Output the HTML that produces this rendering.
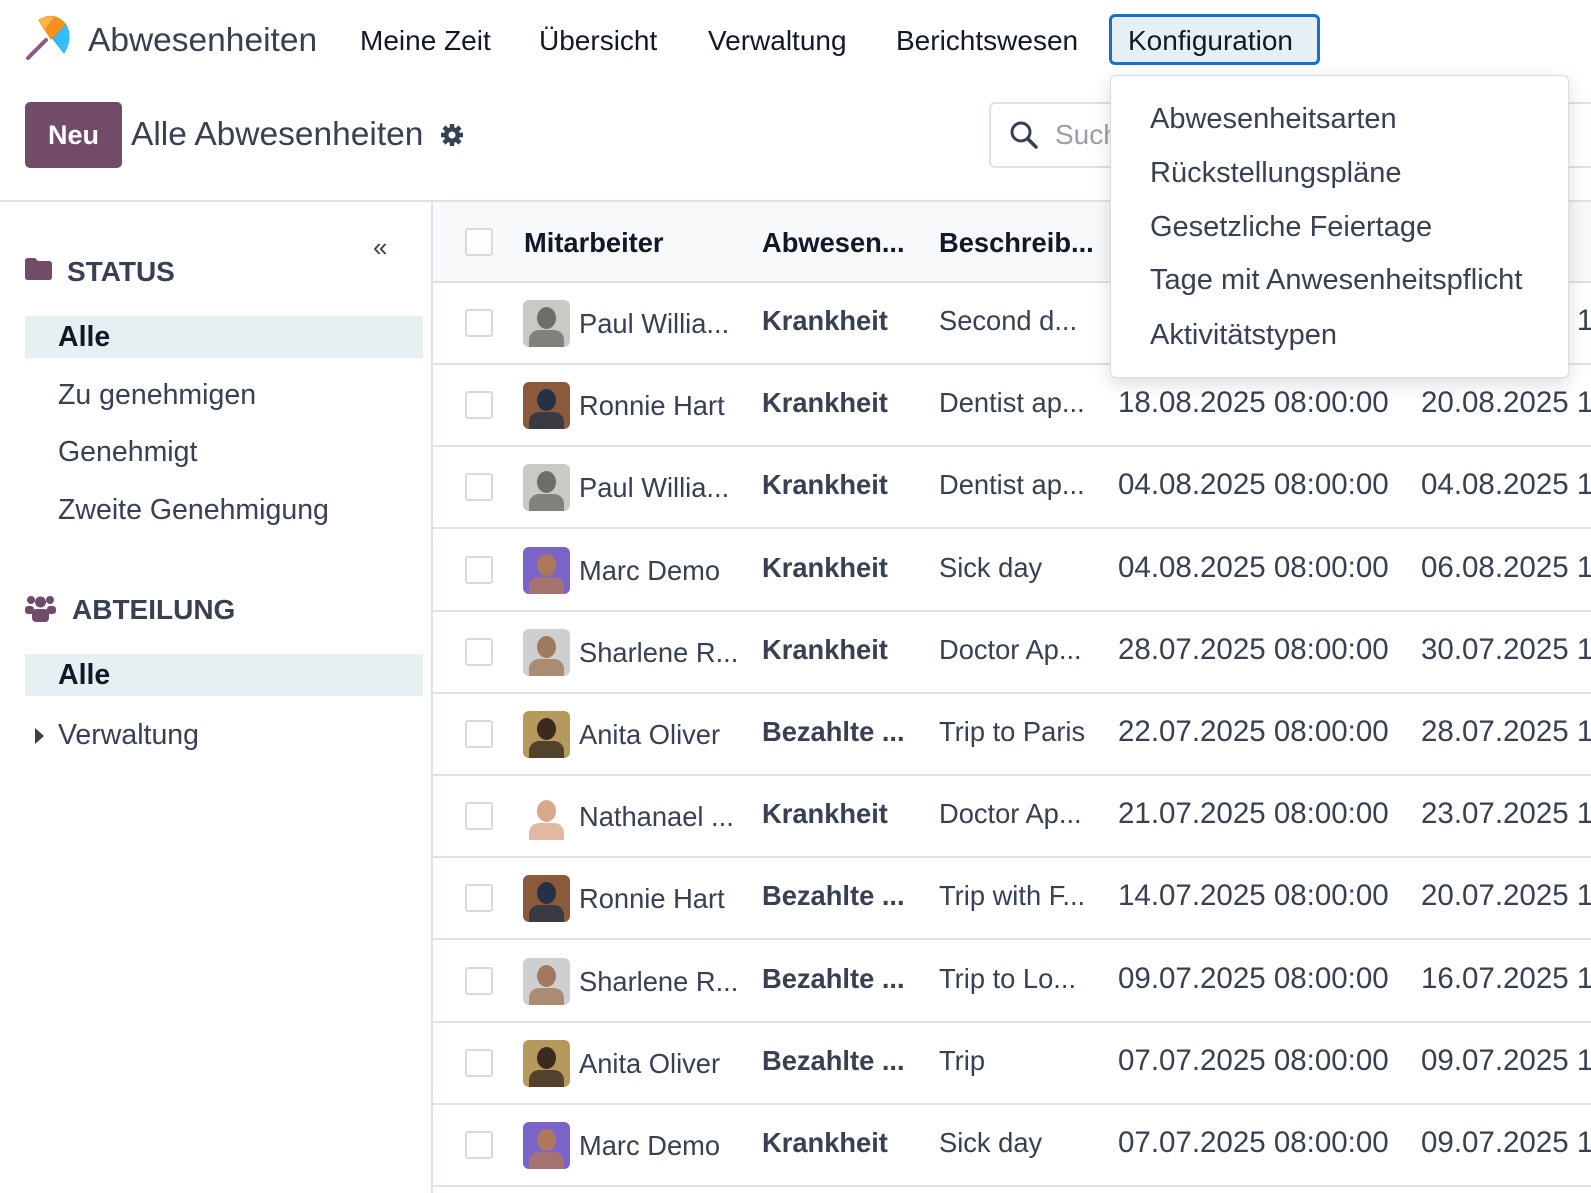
<!DOCTYPE html>
<html><head><meta charset="utf-8"><style>
*{box-sizing:border-box;margin:0;padding:0}
body{width:1591px;height:1193px;overflow:hidden;background:#fff;font-family:"Liberation Sans",sans-serif;color:#374151;position:relative}
.a{position:absolute;white-space:nowrap}
.nav{font-size:28px;color:#111827;top:25px}
.cb{position:absolute;width:28px;height:28px;border:2px solid #d8dadd;border-radius:3px;background:#fff}
.row{position:absolute;left:433px;width:1158px;height:82px;border-bottom:2px solid #dee2e6;font-size:27.3px;color:#374151}
.row .t{position:absolute;top:24px;white-space:nowrap}
.av{position:absolute;left:90px;top:17px;width:47px;height:47px;border-radius:6px;overflow:hidden}
.side{font-size:28.5px;color:#374151}
.dd{font-size:29px;color:#374151;left:1150px}
</style></head><body>
<svg class="a" style="left:24px;top:12px" width="50" height="50" viewBox="0 0 50 50">
<line x1="4" y1="46" x2="22" y2="28" stroke="#8a5a7e" stroke-width="4" stroke-linecap="round"/>
<path d="M14 8 Q30 -2 42 12 Q50 26 40 42 Z" fill="#2ea8f0"/>
<path d="M14 8 Q30 -2 42 12 L27 28 Z" fill="#f7901e"/>
<path d="M14 8 Q22 3 30 5 L20 18 Z" fill="#fbb444"/>
<path d="M42 12 Q50 26 40 42 L30 26 Z" fill="#37bdf8"/>
</svg>
<div class="a" style="left:88px;top:22px;font-size:33.5px;color:#374151">Abwesenheiten</div>
<div class="a nav" style="left:360px">Meine Zeit</div>
<div class="a nav" style="left:539px">Übersicht</div>
<div class="a nav" style="left:708px">Verwaltung</div>
<div class="a nav" style="left:896px">Berichtswesen</div>
<div class="a" style="left:1109px;top:14px;width:211px;height:51px;border:3px solid #1a6fc9;border-radius:6px;background:#e6f0f4"></div>
<div class="a nav" style="left:1128px">Konfiguration</div>

<div class="a" style="left:25px;top:102px;width:97px;height:66px;background:#714b67;border-radius:5px;color:#fff;font-size:27px;font-weight:bold;text-align:center;line-height:66px">Neu</div>
<div class="a" style="left:131px;top:116px;font-size:33.5px;color:#374151">Alle Abwesenheiten</div>
<svg class="a" style="left:440px;top:123px" width="24" height="24" viewBox="0 0 24 24"><g fill="#374151"><circle cx="12" cy="12" r="8"/><g stroke="#374151" stroke-width="4.5"><line x1="12" y1="1" x2="12" y2="23"/><line x1="1" y1="12" x2="23" y2="12"/><line x1="4" y1="4" x2="20" y2="20"/><line x1="20" y1="4" x2="4" y2="20"/></g></g><circle cx="12" cy="12" r="3.5" fill="#fff"/></svg>
<div class="a" style="left:989px;top:102px;width:700px;height:66px;border:2px solid #dee2e6;border-radius:6px"></div>
<svg class="a" style="left:1009px;top:120px" width="30" height="30" viewBox="0 0 30 30"><circle cx="12" cy="12" r="9" fill="none" stroke="#374151" stroke-width="3"/><line x1="19" y1="19" x2="27" y2="27" stroke="#374151" stroke-width="3.5" stroke-linecap="round"/></svg>
<div class="a" style="left:1055px;top:119px;font-size:28px;color:#9aa0a6">Suchen...</div>

<div class="a" style="left:0;top:200px;width:1591px;height:2px;background:#dee2e6"></div>
<div class="a" style="left:431px;top:202px;width:2px;height:991px;background:#dee2e6"></div>

<div class="a" style="left:373px;top:232px;font-size:26px;color:#374151">«</div>
<svg class="a" style="left:25px;top:258px" width="27" height="22" viewBox="0 0 27 22"><path d="M0 3 Q0 0 3 0 H10 L13 3 H24 Q27 3 27 6 V19 Q27 22 24 22 H3 Q0 22 0 19Z" fill="#714b67"/></svg>
<div class="a" style="left:67px;top:256px;font-size:28px;font-weight:bold;color:#374151">STATUS</div>
<div class="a" style="left:25px;top:316px;width:398px;height:42px;background:#e6f0f2"></div>
<div class="a side" style="left:58px;top:321px;color:#111827;font-weight:bold">Alle</div>
<div class="a side" style="left:58px;top:379px">Zu genehmigen</div>
<div class="a side" style="left:58px;top:436px">Genehmigt</div>
<div class="a side" style="left:58px;top:494px">Zweite Genehmigung</div>
<svg class="a" style="left:25px;top:595px" width="31" height="27" viewBox="0 0 31 27"><g fill="#714b67"><circle cx="6" cy="5" r="4"/><circle cx="25" cy="5" r="4"/><circle cx="15.5" cy="7" r="5.5"/><rect x="0" y="11" width="9" height="8" rx="3"/><rect x="22" y="11" width="9" height="8" rx="3"/><rect x="7" y="14" width="17" height="13" rx="4"/></g></svg>
<div class="a" style="left:72px;top:594px;font-size:28px;font-weight:bold;color:#374151">ABTEILUNG</div>
<div class="a" style="left:25px;top:654px;width:398px;height:42px;background:#e6f0f2"></div>
<div class="a side" style="left:58px;top:659px;color:#111827;font-weight:bold">Alle</div>
<svg class="a" style="left:35px;top:728px" width="10" height="16" viewBox="0 0 10 16"><path d="M0 0 L9 8 L0 16Z" fill="#374151"/></svg>
<div class="a side" style="left:58px;top:719px">Verwaltung</div>

<div class="row" style="top:202px;height:81px;background:#f8f9fb">
<div class="cb" style="left:32px;top:26px"></div>
<div class="t" style="left:91px;top:25px;font-weight:bold;color:#111827">Mitarbeiter</div>
<div class="t" style="left:329px;top:25px;font-weight:bold;color:#111827">Abwesen...</div>
<div class="t" style="left:506px;top:25px;font-weight:bold;color:#111827">Beschreib...</div>
</div>

<div id="rows"></div>
<script>
var R=[["Paul Willia...","Krankheit","Second d...","13.08.2025 08:00:00","15.08.2025","#c9c9c6","#6b6f69"],
["Ronnie Hart","Krankheit","Dentist ap...","18.08.2025 08:00:00","20.08.2025","#8a5a3a","#253245"],
["Paul Willia...","Krankheit","Dentist ap...","04.08.2025 08:00:00","04.08.2025","#c9c9c6","#6b6f69"],
["Marc Demo","Krankheit","Sick day","04.08.2025 08:00:00","06.08.2025","#7a64c8","#b0785a"],
["Sharlene R...","Krankheit","Doctor Ap...","28.07.2025 08:00:00","30.07.2025","#cfcfd2","#a07a5e"],
["Anita Oliver","Bezahlte ...","Trip to Paris","22.07.2025 08:00:00","28.07.2025","#b59a5c","#3a2a22"],
["Nathanael ...","Krankheit","Doctor Ap...","21.07.2025 08:00:00","23.07.2025","#ffffff","#d9a88c"],
["Ronnie Hart","Bezahlte ...","Trip with F...","14.07.2025 08:00:00","20.07.2025","#8a5a3a","#253245"],
["Sharlene R...","Bezahlte ...","Trip to Lo...","09.07.2025 08:00:00","16.07.2025","#cfcfd2","#a07a5e"],
["Anita Oliver","Bezahlte ...","Trip","07.07.2025 08:00:00","09.07.2025","#b59a5c","#3a2a22"],
["Marc Demo","Krankheit","Sick day","07.07.2025 08:00:00","09.07.2025","#7a64c8","#b0785a"]];
var h="";
R.forEach(function(r,i){var top=283+Math.round(i*82.2);
h+='<div class="row" style="top:'+top+'px"><div class="cb" style="left:32px;top:26px"></div>'+
'<div class="av" style="background:'+r[5]+'"><div style="position:absolute;left:14px;top:7px;width:19px;height:22px;border-radius:50%;background:'+r[6]+'"></div><div style="position:absolute;left:6px;top:30px;width:35px;height:20px;border-radius:10px 10px 0 0;background:'+r[6]+';opacity:.8"></div></div>'+
'<div class="t" style="left:146px;top:25px">'+r[0]+'</div>'+
'<div class="t" style="left:329px;top:22px;font-weight:bold">'+r[1]+'</div>'+
'<div class="t" style="left:506px;top:22px">'+r[2]+'</div>'+
'<div class="t" style="left:685px;top:21px;font-size:29.5px">'+r[3]+'</div>'+
'<div class="t" style="left:988px;top:21px;font-size:29.5px">'+r[4]+' 1</div></div>';});
document.getElementById("rows").innerHTML=h;
</script>

<div class="a" style="left:1110px;top:75px;width:459px;height:303px;background:#fff;border:1px solid #dcdcdc;border-radius:6px;box-shadow:0 6px 18px rgba(0,0,0,.14)"></div>
<div class="a dd" style="top:103px">Abwesenheitsarten</div>
<div class="a dd" style="top:157px">Rückstellungspläne</div>
<div class="a dd" style="top:211px">Gesetzliche Feiertage</div>
<div class="a dd" style="top:264px">Tage mit Anwesenheitspflicht</div>
<div class="a dd" style="top:319px">Aktivitätstypen</div>
</body></html>
